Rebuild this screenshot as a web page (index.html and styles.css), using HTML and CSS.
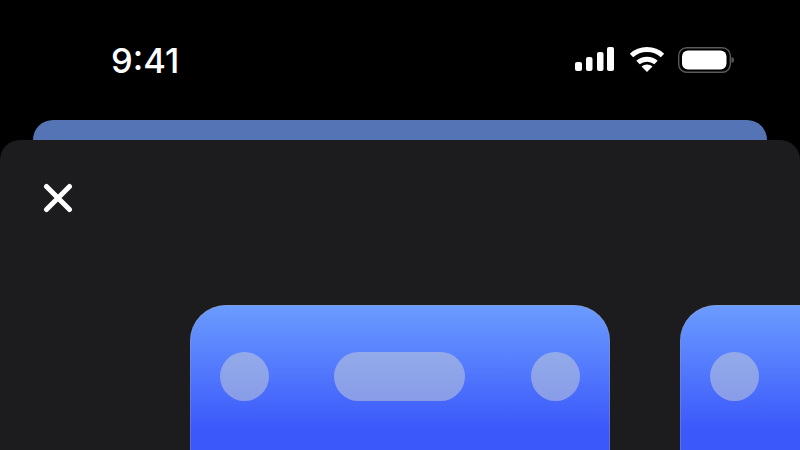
FILE: index.html
```html
<!DOCTYPE html>
<html lang="en">
<head>
<meta charset="utf-8">
<title>Card picker</title>
<link rel="stylesheet" href="styles.css">
</head>
<body>
<div class="status">
  <span class="time">9:41</span>
  <div class="status-icons">
    <svg class="signal" width="40" height="25" viewBox="0 0 40 25"><rect x="0" y="15" width="7" height="9" rx="2"/><rect x="11" y="10" width="6.5" height="14" rx="2"/><rect x="22" y="5" width="6.5" height="19" rx="2"/><rect x="32" y="0" width="7" height="24" rx="2"/></svg>
    <svg class="wifi" width="36" height="26" viewBox="0 0 36 26"><path d="M2.500 8.500C11 .5 25 .5 33.500 8.500"/><path d="M9 15.500C14 11 22 11 27 15.500"/><path class="wifi-dot" d="M18 25L12.500 19.500C15.500 16.800 20.500 16.800 23.500 19.500Z"/></svg>
    <svg class="battery" width="57" height="26" viewBox="0 0 57 26"><rect class="battery-shell" x="0.700" y="0.700" width="51.600" height="24.600" rx="8"/><rect class="battery-fill" x="4" y="3.500" width="44.500" height="19" rx="6"/><path class="battery-cap" d="M53.500 10C55.500 10.500 56 11.500 56 13C56 14.500 55.500 15.500 53.500 16Z"/></svg>
  </div>
</div>
<div class="back-card"></div>
<main class="sheet">
  <svg class="close" width="30" height="30" viewBox="0 0 30 30"><path d="M3.500 3.500L26.500 26.500M26.500 3.500L3.500 26.500"/></svg>
  <div class="carousel">
    <div class="card">
      <span class="dot"></span>
      <span class="pill"></span>
      <span class="dot"></span>
    </div>
    <div class="card">
      <span class="dot"></span>
      <span class="pill"></span>
      <span class="dot"></span>
    </div>
  </div>
</main>
</body>
</html>
```
FILE: styles.css
```css
* { box-sizing: border-box; }
html, body {
  margin: 0;
  width: 800px;
  height: 450px;
  overflow: hidden;
  background: #000;
  font-family: Inter, "Liberation Sans", sans-serif;
}
.status {
  height: 120px;
  padding: 41px 65px 0 111px;
  display: flex;
  justify-content: space-between;
  align-items: flex-start;
}
.time {
  color: #fff;
  font-size: 34.500px;
  font-weight: 550;
  line-height: 40px;
}
.status-icons {
  display: flex;
  align-items: flex-start;
  gap: 14px;
  padding-top: 6px;
}
.signal { fill: #fff; }
.wifi path { fill: none; stroke: #fff; stroke-width: 5; }
.wifi .wifi-dot { fill: #fff; stroke: none; }
.battery { margin-left: -1px; }
.battery-shell { fill: none; stroke: #5a5a5e; stroke-width: 1.4; }
.battery-fill { fill: #fff; }
.battery-cap { fill: #5a5a5e; }
.back-card {
  height: 40px;
  margin: 0 33px;
  border-radius: 20px 20px 0 0;
  background: #5574b5;
}
.sheet {
  margin-top: -20px;
  position: relative;
  height: 310px;
  background: #1c1c1e;
  border-radius: 20px 20px 0 0;
  overflow: hidden;
}
.close {
  position: absolute;
  left: 43px;
  top: 43px;
  fill: none;
  stroke: #fff;
  stroke-width: 5;
  stroke-linecap: round;
}
.carousel {
  display: flex;
  gap: 70px;
  padding: 165px 0 0 190px;
}
.card {
  flex: 0 0 420px;
  height: 300px;
  padding: 47px 30px 0;
  display: flex;
  justify-content: space-between;
  align-items: flex-start;
  border-radius: 36px;
  background: linear-gradient(180deg, #6b9cff 0, #3b58fb 125px, #3b58fb 100%);
  box-shadow: inset 0 0 0 1px rgba(150, 155, 170, 0.4);
}
.dot {
  width: 49px;
  height: 49px;
  border-radius: 50%;
  background: rgba(218, 220, 209, 0.45);
}
.pill {
  width: 131px;
  height: 49px;
  margin-left: -1px;
  border-radius: 25px;
  background: rgba(218, 220, 209, 0.45);
}
```
